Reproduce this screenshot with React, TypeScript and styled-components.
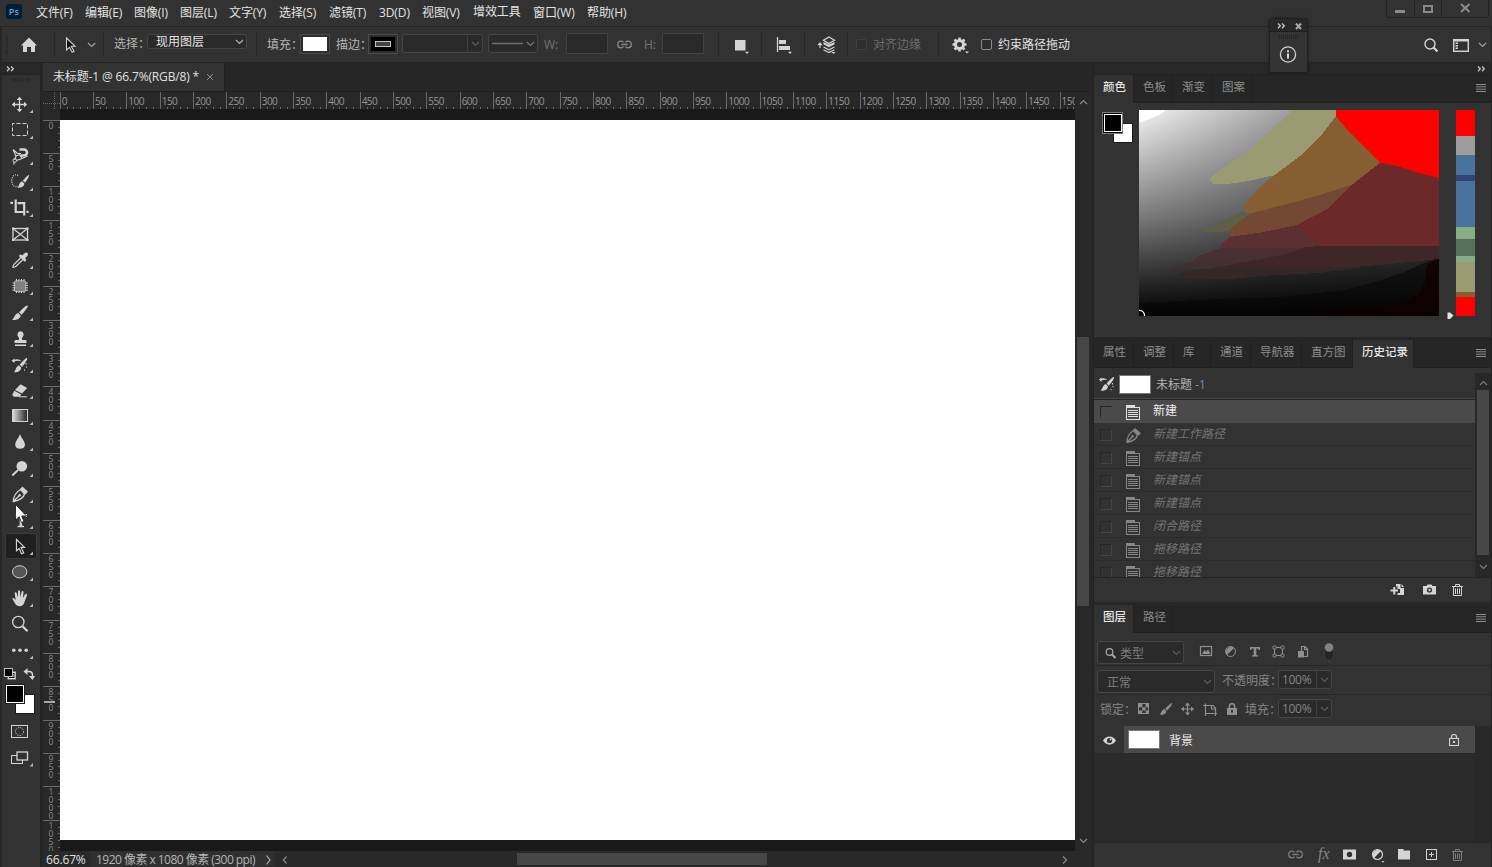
import React from 'react';
import styled, { createGlobalStyle } from 'styled-components';

const Global = createGlobalStyle`
  * { box-sizing: border-box; }
  html, body { margin: 0; background: #323232; overflow: hidden; }
  body { font-family: "Open Sans", "Noto Sans CJK SC", sans-serif; font-size: 12px; color: #d6d6d6; }
  svg { display: block; flex: none; }
`;

const LINE = '#242424';
const ICON = '#d4d4d4';
const DIM = '#8f8f8f';

/* ---------- frame ---------- */
const Page = styled.div`
  width: 1492px; height: 867px; background: #323232; display: flex; flex-direction: column;
  position: relative; overflow: hidden;
`;
const MenuBar = styled.div`
  height: 27px; flex: none; display: flex; border-bottom: 1px solid ${LINE}; padding-left: 6px;
`;
const Logo = styled.div`
  width: 16px; height: 15px; margin: 4px 14px 0 0; border-radius: 3px; background: #001d34; color: #6aa3dc;
  font-size: 9px; font-weight: 600; line-height: 15px; text-align: center; letter-spacing: 0.2px;
`;
const MenuItem = styled.div<{ $w: number; $up?: boolean }>`
  width: ${p => p.$w}px; flex: none; white-space: nowrap; color: #e2e2e2; line-height: 16px;
  padding-top: ${p => (p.$up ? 4 : 5)}px; letter-spacing: -0.1px;
`;
const WindowButtons = styled.div`
  display: flex; width: 103px; height: 18px; margin-left: auto; margin-right: 3px;
  border: 1px solid ${LINE}; border-top: 0; border-radius: 0 0 3px 3px;
`;
const WinBtn = styled.div<{ $w: number }>`
  width: ${p => p.$w}px; display: flex; & + & { border-left: 1px solid ${LINE}; }
`;
const OptionsBar = styled.div`
  height: 36px; flex: none; display: flex; border-bottom: 1px solid ${LINE}; border-left: 2px solid #262626;
  border-right: 1px solid ${LINE};
`;
const Slot = styled.div<{ $w: number; $t?: number }>`
  width: ${p => p.$w}px; flex: none; padding-top: ${p => p.$t ?? 0}px;
`;
const Label = styled.div<{ $w: number; $c?: string; $t?: number; $l?: number }>`
  width: ${p => p.$w}px; flex: none; white-space: nowrap; line-height: 16px; color: ${p => p.$c ?? '#b4b4b4'};
  margin-top: ${p => p.$t ?? 10}px; padding-left: ${p => p.$l ?? 0}px;
`;
const VLine = styled.div`
  width: 1px; height: 25px; margin-top: 5px; background: #272727; flex: none;
`;
const Field = styled.div<{ $w: number; $h: number; $t?: number; $c?: string; $r?: number }>`
  width: ${p => p.$w}px; height: ${p => p.$h}px; margin-top: ${p => p.$t ?? 0}px; margin-right: ${p => p.$r ?? 0}px;
  flex: none; display: flex; align-items: center; background: #2a2a2a; color: ${p => p.$c ?? '#6f6f6f'};
  border: 1px solid #454545; border-radius: 3px; white-space: nowrap; line-height: 14px;
`;
const PlainField = styled(Field)`border-radius: 0; border-color: #414141;`;
const FieldText = styled.div<{ $l: number; $d?: number; $s?: number }>`
  flex: 1; padding-left: ${p => p.$l}px; padding-top: ${p => p.$d ?? 0}px; letter-spacing: ${p => p.$s ?? 0}px;
`;
const FieldArrow = styled.div<{ $w: number; $line?: boolean }>`
  width: ${p => p.$w}px; height: 100%; display: flex; align-items: center; justify-content: center;
  border-left: ${p => (p.$line ? '1px solid #404040' : '0')};
`;
const Swatch = styled.div<{ $c: string }>`
  width: 30px; height: 20px; margin-top: 7px; border: 1px solid #4c4c4c; background: ${p => p.$c};
  box-shadow: inset 0 0 0 2px #2c2c2c; display: flex; align-items: center; justify-content: center; flex: none;
`;
const StrokeMark = styled.div`
  width: 16px; height: 6px; border: 1px solid #c4c4c4; background: #444;
`;
const Check = styled.div<{ $c: string; $t: number; $l: number }>`
  width: 11px; height: 11px; border: 1px solid ${p => p.$c}; border-radius: 2px; margin: ${p => p.$t}px 6px 0 ${p => p.$l}px;
  flex: none; background: #2e2e2e;
`;

/* ---------- workspace ---------- */
const Work = styled.div`
  flex: 1; display: flex; min-height: 0; background: #262626;
`;
const ToolColumn = styled.div`
  width: 41px; flex: none; border-left: 2px solid #262626; border-right: 1px solid #222; display: flex; flex-direction: column;
`;
const ColumnHead = styled.div<{ $right?: boolean }>`
  height: 12px; flex: none; background: #282828; border-bottom: 1px solid #222;
  display: flex; justify-content: ${p => (p.$right ? 'flex-end' : 'flex-start')}; padding: 3px ${p => (p.$right ? 5 : 4)}px 0;
`;
const ToolPanel = styled.div`
  flex: 1; background: #323232; display: flex; flex-direction: column; padding-top: 3px;
`;
const Grip = styled.div`
  height: 4px; width: 19px; margin: 0 0 9px 9px; flex: none;
  background: repeating-linear-gradient(90deg, #262626 0 1px, #323232 1px 2px);
`;
const Tool = styled.div<{ $on?: boolean }>`
  height: 26px; width: 38px; flex: none; position: relative;
  ${p => p.$on && `background: #1f1f1f; box-shadow: inset 0 0 0 1px #3a3a3a; border-radius: 3px; margin: 0 3px; width: 32px; svg { margin-left: -3px; }`}
`;
const DocColumn = styled.div`
  width: 1048px; flex: none; margin-left: 2px; display: flex; flex-direction: column; background: #262626;
`;
const DocTabs = styled.div`
  height: 29px; flex: none; display: flex; border-bottom: 1px solid #202020;
`;
const DocTab = styled.div`
  width: 182px; height: 28px; background: #323232; display: flex; padding: 6px 0 0 10px; color: #e0e0e0; line-height: 16px;
  border-right: 1px solid #202020; white-space: nowrap;
`;
const TabTitle = styled.div`width: 153px; letter-spacing: -0.15px;`;
const DocBody = styled.div`
  height: 759px; flex: none; display: flex;
`;
const RulerV = styled.div`
  width: 17px; background: #282828; display: flex; flex-direction: column; overflow: hidden; position: relative;
`;
const RulerCorner = styled.div`height: 17px; flex: none;`;
const VCells = styled.div`
  height: 742px; overflow: hidden; padding-top: 10.7px; position: relative;
`;
const VCell = styled.div`
  height: 33.333px; border-top: 1px solid #6a6a6a; position: relative; display: flex; flex-direction: column;
  padding: 1px 0 0 5px; color: #8a8a8a; font-size: 8.5px; line-height: 8px;
  span { height: 8px; width: 6px; text-align: center; }
`;
const Ticks = styled.svg`
  position: absolute; left: 0; bottom: 0;
`;
const TicksV = styled.svg`
  position: absolute; right: 0; top: -1px;
`;
const Marker = styled.div`
  position: absolute; left: 1px; top: 609px; width: 11px; height: 2px; background: #a8a8a8;
`;
const CanvasCol = styled.div`
  width: 1015px; display: flex; flex-direction: column;
`;
const RulerH = styled.div`
  height: 17px; background: #282828; display: flex; overflow: hidden; flex: none;
`;
const HCell = styled.div`
  width: 33.333px; flex: none; height: 17px; border-left: 1px solid #6a6a6a; position: relative; color: #969696;
  font-size: 10px; line-height: 19px; padding-left: 1px; letter-spacing: -0.5px;
  &:first-child { margin-left: -0.3px; }
`;
const Pasteboard = styled.div`
  height: 742px; background: #191919; padding: 11px 0;
`;
const Sheet = styled.div`height: 720px; background: #fff;`;
const ScrollV = styled.div`
  width: 16px; background: #282828; display: flex; flex-direction: column; align-items: center; justify-content: space-between;
`;
const Thumb = styled.div<{ $w: number; $h: number }>`
  width: ${p => p.$w}px; height: ${p => p.$h}px; background: #474747; flex: none;
`;
const Status = styled.div`
  flex: 1; display: flex; background: #292929; line-height: 17px; border-bottom: 1px solid #222;
`;
const Zoom = styled.div`width: 48px; padding-left: 3px; color: #e0e0e0; font-size: 12px; letter-spacing: -0.15px;`;
const DocInfo = styled.div`
  width: 184px; background: #303030; padding-left: 5px; color: #b4b4b4; display: flex; white-space: nowrap; letter-spacing: -0.53px;
`;

/* ---------- right panels ---------- */
const Right = styled.div`
  width: 399px; margin-left: 2px; flex: none; display: flex; flex-direction: column; border-left: 1px solid #222; border-right: 1px solid #222;
`;
const Panel = styled.div<{ $h: number; $gap?: number }>`
  height: ${p => p.$h}px; flex: none; margin-bottom: ${p => p.$gap ?? 0}px; display: flex; flex-direction: column; background: #323232;
`;
const TabRow = styled.div`
  height: 28px; flex: none; display: flex; background: #262626; position: relative;
`;
const Tab = styled.div<{ $w: number; $on?: boolean }>`
  width: ${p => p.$w}px; height: 28px; flex: none; padding: 4px 0 0 9px; line-height: 16px; font-size: 11.5px; white-space: nowrap;
  color: ${p => (p.$on ? '#e8e8e8' : '#8c8c8c')}; background: ${p => (p.$on ? '#323232' : 'transparent')};
  font-weight: ${p => (p.$on ? 500 : 400)};
  border-right: 1px solid #202020; border-bottom: ${p => (p.$on ? '0' : '1px solid #202020')};
`;
const TabRest = styled.div`
  flex: 1; border-bottom: 1px solid #202020; display: flex; justify-content: flex-end; padding: 9px 5px 0 0;
`;
const ColorBody = styled.div`
  display: flex; padding: 7px 0 0 8px;
`;
const HistoryWrap = styled.div`
  height: 209px; flex: none; display: flex;
`;
const HistoryList = styled.div`
  width: 381px; overflow: hidden;
`;
const Snapshot = styled.div`
  height: 32px; display: flex; align-items: center; padding: 1px 0 0 5px; border-bottom: 1px solid #252525; 
  box-shadow: inset 0 -1px 0 #484848; color: #b4b4b4;
  b { font-weight: 400; color: #6f93b8; }
`;
const Thumbnail = styled.div`
  width: 32px; height: 19px; background: #fff; border: 1px solid #777; flex: none;
`;
const HRow = styled.div<{ $on?: boolean }>`
  height: 23px; display: flex; color: ${p => (p.$on ? '#ececec' : '#727272')}; font-style: ${p => (p.$on ? 'normal' : 'italic')};
  background: ${p => (p.$on ? '#4a4a4a' : '#323232')}; border-bottom: 1px solid ${p => (p.$on ? '#4a4a4a' : '#2b2b2b')};
  padding-left: 6px; line-height: 16px; white-space: nowrap;
`;
const HBox = styled.div<{ $on?: boolean }>`
  width: 12px; height: 12px; margin: 6px 14px 0 0; border: 1px solid ${p => (p.$on ? 'transparent' : '#454545')};
  border-left-color: #262626; border-top-color: #262626; flex: none;
`;
const HText = styled.div`margin: 3px 0 0 13px; height: 18px;`;
const ScrollHist = styled.div`
  width: 16px; margin-top: 5px; background: #282828; display: flex; flex-direction: column; align-items: center;
`;
const Foot = styled.div<{ $h: number }>`
  height: ${p => p.$h}px; flex: none; border-top: 1px solid #242424; display: flex; background: #323232;
`;
const CtlRow = styled.div<{ $h: number; $line?: boolean }>`
  height: ${p => p.$h}px; flex: none; display: flex; border-bottom: ${p => (p.$line ? '1px solid #282828' : '0')};
`;
const LayerArea = styled.div`
  height: 116px; flex: none; background: #2b2b2b; display: flex;
`;
const LayerRow = styled.div`
  width: 381px; height: 27px; display: flex; background: #323232;
`;
const LayerMain = styled.div`
  margin-left: auto; width: 351px; background: #4a4a4a; display: flex; align-items: center; padding-left: 4px; color: #ececec;
`;
const LayerScroll = styled.div`width: 16px; background: #282828;`;
const Fx = styled.div`
  width: 17px; font-family: "Liberation Serif", serif; font-style: italic; font-size: 16px; line-height: 20px; color: #858585; padding-top: 1px;
`;

/* ---------- floating panel and pointer ---------- */
const Float = styled.div`
  position: absolute; left: 1269px; top: 18px; width: 39px; height: 55px; background: #343434; border: 1px solid #202020;
  border-radius: 4px 4px 0 0; box-shadow: 0 0 3px rgba(0,0,0,.4);
`;
const FloatHead = styled.div`
  height: 13px; background: #282828; border-bottom: 1px solid #1e1e1e; display: flex; padding: 4px 0 0 7px; border-radius: 3px 3px 0 0;
`;
const FloatGrip = styled(Grip)`margin: 3px 0 6px 9px;`;
const Pointer = styled.svg`
  position: absolute; left: 14px; top: 503px;
`;

/* ---------- icons ---------- */
type IP = { w: number; h: number; x?: number; y?: number; children: React.ReactNode };
const I = ({ w, h, x = 0, y = 0, children }: IP) => (
  <svg width={w} height={h} viewBox={`${x} ${y} ${w} ${h}`} fill="none">{children}</svg>
);
const Chevron = ({ c = '#9a9a9a', up = false }: { c?: string; up?: boolean }) => (
  <I w={9} h={6}><path d={up ? 'M1 5L4.5 1.5L8 5' : 'M1 1L4.5 4.5L8 1'} stroke={c} strokeWidth="1.2" /></I>
);
const DoubleArrow = () => (
  <I w={9} h={6}><path d="M1 .5L3.3 2.8L1 5.2M5 .5L7.3 2.8L5 5.2" stroke="#c8c8c8" strokeWidth="1.3" /></I>
);
const MenuLines = () => (
  <I w={10} h={8}><path d="M0 .5H10M0 2.8H10M0 5.2H10M0 7.5H10" stroke="#8e8e8e" /></I>
);
const Corner = () => <path d="M33 18.5V22H29.5Z" fill="#b8b8b8" />;

const brush = 'M27.5 5.5L28.5 6.5C26 10.5 24 13 22 15L19.5 12.5C22 10 24.5 7.5 27.5 5.5ZM18.7 13.2L21.2 15.8C20.7 19.5 16.5 20.7 12.5 20.3C15 18.5 15 14 18.7 13.2Z';

const tools: { g: React.ReactNode; corner?: boolean; on?: boolean }[] = [
  { g: <><path d="M19.5 7V20M13 13.5H26" stroke={ICON} strokeWidth="1.3" /><path d="M19.5 5.8L22.3 9H16.7ZM19.5 21.2L22.3 18H16.7ZM11.8 13.5L15 10.7V16.3ZM27.2 13.5L24 10.7V16.3Z" fill={ICON} /></> },
  { g: <rect x="12.5" y="6.5" width="15" height="12" stroke={ICON} strokeDasharray="4 2" strokeDashoffset="2" /> },
  { g: <><path d="M19.5 5.2H24A4.300 4.300 0 0 1 24 13.800H20.500V11.300H24A1.700 1.700 0 0 0 24 7.800H19.500Z" fill={ICON} /><path d="M13 6.500L17.500 10.500M13 6.500L16 13L14.500 17M17.500 10.500H21M22 15.500L27.500 13M14 19V21.500M16.500 17.500L22 15.500L19.500 11.500M16 13L19.500 11.500" stroke={ICON} strokeWidth="1.2" /><circle cx="14.800" cy="17.500" r="1.800" stroke={ICON} /></> },
  { g: <><path d="M18 6.5A4.2 6 0 1 0 18 17" stroke={ICON} strokeDasharray="1 1.200" strokeWidth="1.2" /><path d="M28.500 6L29.200 6.800C28 9.500 26.500 12 25 13.800L22.800 11.600C24.500 9.700 26.300 7.600 28.500 6ZM22 12.300L24.400 14.600C24 18 21 19.200 17.200 18.800C19.500 17.500 19 13.200 22 12.300Z" fill={ICON} /></> },
  { g: <path d="M10.5 7.8H13M15.7 4.5V17H23M17.5 8.2H24.2V20.5M26.5 16.8H28.7" stroke={ICON} strokeWidth="2.2" /> },
  { corner: false, g: <><rect x="13" y="7.500" width="14.5" height="11.5" stroke={ICON} strokeWidth="1.3" /><path d="M13 7.500L27.5 19M27.5 7.500L13 19" stroke={ICON} strokeWidth="1.2" /><path d="M12 6.500h2v2h-2zM26.500 6.500h2v2h-2zM12 18h2v2h-2zM26.500 18h2v2h-2z" fill={ICON} /></> },
  { g: <><path d="M21.500 10L14 17.300C13.200 18.300 13 19 13 20.500C14.500 20.500 15 20 16 19.200L23.500 12" stroke={ICON} strokeWidth="1.2" /><path d="M18.800 9L20.500 7.300L22 8.500L24.500 6.200C27 4.200 29 7 27.300 9L25 11.300L26.500 13L24.800 14.700Z" fill={ICON} /></> },
  { g: <><path d="M16.5 6V20M19 6V20M21.5 6V20M24 6V20M12.5 10H28M12.5 12.4H28M12.5 14.8H28M12.5 17.2H28" stroke={ICON} /><rect x="14.5" y="7.8" width="11.2" height="10.8" rx="1.5" fill="#808080" stroke={ICON} strokeWidth=".7" /></> },
  { g: <path d={brush} fill={ICON} transform="translate(-.5 .7)" /> },
  { g: <path d="M20.5 6.3A3.3 3.3 0 0 1 22.6 12C21.8 13 22 14 22.3 15H25.3Q26.5 15 26.5 16.2V18H14.5V16.2Q14.5 15 15.7 15H18.7C19 14 19.2 13 18.4 12A3.3 3.3 0 0 1 20.5 6.3ZM15 19.4H26V21H15Z" fill={ICON} /> },
  { g: <><path d={brush} fill={ICON} transform="translate(3.2 1.3) scale(.85 .98)" /><path d="M11.5 9.8L14.500 7.500V8.8C17 7.500 20 8.300 21.500 10.5C19 9.500 17 9.500 14.500 10.3V12Z" fill={ICON} /><path d="M26 12v1.5M26.5 15.5v1.2M24.5 18.5v1.2" stroke={ICON} /></> },
  { g: <><path d="M20.5 7.2L27.2 11L22 16.6L15 13ZM14.3 13.8L21.3 17.500L19.5 19.8H14L12.2 18Z" fill={ICON} /><path d="M19 19.800H27" stroke={ICON} /></> },
  { g: <><defs><linearGradient id="tg"><stop offset="0" stopColor="#e0e0e0" /><stop offset="1" stopColor="#222" /></linearGradient></defs><rect x="12.5" y="6.5" width="15" height="12" fill="url(#tg)" stroke={ICON} /></> },
  { g: <path d="M20 5C21 8.5 25 12 25 16A5 4.8 0 0 1 15.200 16C15.200 12 19 8.500 20 5Z" fill={ICON} /> },
  { g: <><circle cx="21.8" cy="11.2" r="5.3" fill={ICON} /><path d="M18 15L12.3 20.500" stroke={ICON} strokeWidth="1.8" /></> },
  { g: <><path d="M13.300 20.500C13.500 16 14.500 12 20.500 8.500L24.500 13C23.500 17.500 18.500 19.500 13.300 20.500ZM13.300 20.500L19.500 14.500" stroke={ICON} strokeWidth="1.3" /><circle cx="19.700" cy="14.300" r="1.200" fill={ICON} /><path d="M20 8L22.500 5.500L28 10.800L25.500 13.500Z" fill={ICON} /></> },
  { g: <path d="M15 7H27V10H25.800L25 8.500H21.900V18.500L24 19V20.300H17.500V19L19.700 18.500V8.500H17L16 10H15Z" fill={ICON} /> },
  { on: true, g: <path d="M16.500 6.500L24.500 14.300H21L23.700 20L21.500 20.800L19.200 15.500L16.500 17.800Z" fill="#111" stroke={ICON} strokeWidth="1.200" /> },
  { g: <ellipse cx="19.700" cy="12.800" rx="7.200" ry="6.100" fill="#555" stroke={ICON} /> },
  { g: <path d="M12.300 13.300C13.300 12.500 14.300 13.500 15.700 15L14.700 8.500C14.600 7 16.400 6.800 16.700 8.300L17.700 12.500L18 6.200C18.200 4.800 19.900 4.800 20 6.200L20.300 12.300L21.600 6.800C22 5.500 23.600 5.900 23.500 7.200L22.900 13L25.200 9.200C26 8.200 27.500 9 27 10.300L24.300 17.500C23.500 20.200 22 21.200 19.800 21.200C16.500 21.200 15.500 19.300 14.500 17.500C13.700 16 12.500 14.800 12.300 13.300Z" fill={ICON} /> },
  { corner: false, g: <><circle cx="18.300" cy="11" r="5.700" stroke={ICON} strokeWidth="1.300" /><path d="M22.500 15.200L27.500 20.300" stroke={ICON} strokeWidth="2.200" /></> },
  { g: <><circle cx="13.800" cy="13.200" r="1.800" fill={ICON} /><circle cx="20" cy="13.200" r="1.800" fill={ICON} /><circle cx="26.200" cy="13.200" r="1.800" fill={ICON} /></> },
];

const DocIcon = ({ c }: { c: string }) => (
  <I w={14} h={15}><path d="M0 0H9V2H0Z" fill={c} /><rect x=".5" y="2.500" width="13" height="12" stroke={c} /><path d="M2 5.500H12M2 7.500H12M2 9.500H12M2 11.500H12" stroke={c} strokeWidth="1" /></I>
);
const PenIcon = ({ c }: { c: string }) => (
  <I w={15} h={15} x={13} y={6}><path d="M14 20.300C14 16 15 12 20.500 8.500L24.500 13C23.500 17.500 18.500 19.500 14 20.300ZM14 20.300L19.500 14.500" stroke={c} strokeWidth="1.300" /><circle cx="19.700" cy="14.300" r="1.200" fill={c} /><path d="M20 8L22 6L28 11.200L25.500 13.500Z" fill={c} /></I>
);
const LinkIcon = ({ c }: { c: string }) => (
  <I w={15} h={9}><path d="M6.500 2.300C5.900 1.500 5 1.200 4 1.200A3.300 3.300 0 0 0 4 7.800C5 7.800 5.900 7.500 6.500 6.700M8.500 2.300C9.100 1.500 10 1.200 11 1.200A3.300 3.300 0 0 1 11 7.800C10 7.800 9.100 7.500 8.500 6.700M4.300 4.500H10.700" stroke={c} strokeWidth="1.300" /></I>
);
const HistoryBrush = () => (
  <I w={15} h={14} x={12} y={7}><path d={brush} fill={ICON} transform="translate(3 1.800) scale(.85 .93)" /><path d="M12 9.500L14.500 7.500V8.800C17 7.800 19 8.500 20.500 10.300C18 9.700 16.500 9.700 14.500 10.500V12Z" fill={ICON} /><path d="M25.500 13v1.500M26 16v1.200M24 19v1.200" stroke={ICON} /></I>
);

const hLabels = Array.from({ length: 31 }, (_, i) => i * 50);
const vLabels = Array.from({ length: 22 }, (_, i) => i * 50);

const menus: [string, number][] = [
  ['文件(F)', 49], ['编辑(E)', 49], ['图像(I)', 46], ['图层(L)', 49], ['文字(Y)', 50], ['选择(S)', 50], ['滤镜(T)', 50],
  ['3D(D)', 43], ['视图(V)', 51], ['增效工具', 60], ['窗口(W)', 54], ['帮助(H)', 60],
];
const historyRows = ['新建工作路径', '新建锚点', '新建锚点', '新建锚点', '闭合路径', '拖移路径', '拖移路径'];

const Ramp = () => (
  <I w={300} h={206}>
    <defs>
      <linearGradient id="rx" x1="0" x2="1" y1="0" y2="0"><stop offset="0" stopColor="#f4f4f4" /><stop offset=".5" stopColor="#a0a0a0" /><stop offset="1" stopColor="#848484" /></linearGradient>
      <linearGradient id="ry" x1="0" x2="0" y1="0" y2="1"><stop offset="0" stopColor="#000" stopOpacity="0" /><stop offset=".5" stopColor="#000" stopOpacity=".48" /><stop offset=".85" stopColor="#000" stopOpacity=".85" /><stop offset="1" stopColor="#000" /></linearGradient>
    </defs>
    <path d="M0 0H300V206H0Z" fill="url(#rx)" />
    <path d="M0 0H300V206H0Z" fill="url(#ry)" />
    <g shapeRendering="crispEdges">
      <path d="M0 0H27L22 4L10 9L0 13Z" fill="#fff" />
      <path d="M0 193L60 190L140 187L200 181L240 171L265 162L290 151L300 148V206H0Z" fill="#060606" fillOpacity=".6" />
      <path d="M300 149L288 155L286 172L279 185L255 195L190 202L160 206H300Z" fill="#100000" fillOpacity=".8" />
      <path d="M154 0H197L196 8L184 24L165 46L145 64L131 66L110 71L88 74H74L71 70L74 65L88 55L105 44L123 29L140 13Z" fill="#9a9b72" />
      <path d="M64 121L72 116L86 110L104 101L109 106L94 120L82 122H66Z" fill="#5f5e46" />
      <path d="M197 6L242 53L214 74L190 82L160 91L113 103L105 101V96L112 86L124 74L145 58L165 43L184 23Z" fill="#875d32" />
      <path d="M214 74L208 79L190 98L175 106L158 115L125 122L94 127L90 124L92 118L108 106L113 103L160 91L190 82Z" fill="#744832" />
      <path d="M158 115L172 130L184 136L176 138H82L80 136L91 127L125 122Z" fill="#5c3033" />
      <path d="M242 52L300 60V136H180L168 127L158 115L175 106L190 98L208 79L214 74Z" fill="#6c2929" />
      <path d="M82 138H167L148 144L110 152H53L60 146Z" fill="#463032" />
      <path d="M53 152H103L72 159H30L38 155Z" fill="#3d3132" />
      <path d="M167 137L182 136H300V149L250 154L205 158L68 159L100 153L148 144Z" fill="#3f2728" />
      <path d="M60 159L225 157L180 163L120 166L92 169H48L38 166L42 163Z" fill="#332728" />
      <path d="M197 0H300V68L280 63L258 56L242 53L224 36L206 17L197 6Z" fill="#f00" />
    </g>
    <path d="M0 200.500A5 5 0 0 1 5.500 206" stroke="#fff" strokeWidth="1.200" />
  </I>
);

const Hues = () => {
  const bands: [number, number, string][] = [[0, 26, '#f00'], [26, 19, '#9c9c9c'], [45, 20, '#49739c'], [65, 6, '#314572'], [71, 46, '#49739c'], [117, 12, '#86ae86'], [129, 17, '#56705a'], [146, 6, '#86ae86'], [152, 30, '#9a9b72'], [182, 5, '#875d32'], [187, 19, '#f00']];
  return <I w={29} h={210}>{bands.map(([y, h, c]) => <rect key={y} x="10" y={y} width="19" height={h} fill={c} />)}<path d="M1.500 202.500H4L7.500 205.500L4 209H1.500Z" fill="#e4e4e4" /></I>;
};

export default function App() {
  return (
    <>
      <Global />
      <Page>
        <MenuBar>
          <Logo>Ps</Logo>
          {menus.map(([t, w]) => <MenuItem key={t} $w={w} $up={t === '增效工具'}>{t}</MenuItem>)}
          <WindowButtons>
            <WinBtn $w={27}><I w={26} h={17}><path d="M8 10H18V13H8Z" fill="#8a8a8a" /></I></WinBtn>
            <WinBtn $w={27}><I w={26} h={17}><rect x="9" y="6" width="8" height="6" stroke="#8a8a8a" strokeWidth="2" /></I></WinBtn>
            <WinBtn $w={47}><I w={46} h={17}><path d="M19 4L27.500 12M27.500 4L19 12" stroke="#8a8a8a" strokeWidth="2" /></I></WinBtn>
          </WindowButtons>
        </MenuBar>

        <OptionsBar>
          <I w={52} h={35} x={2} y={27}>
            <path d="M7 35V54" stroke="#242424" strokeWidth="2" strokeDasharray="1 1" />
            <path d="M29 37.500L37 45.500H35V52H31V47H27V52H23V45.500H21Z" fill={ICON} />
          </I>
          <VLine />
          <I w={48} h={35} x={55} y={27}>
            <path d="M66.500 38L75 46.200H71.200L74 51.200L72.200 52.200L69.500 47.300L66.500 50Z" fill="#0c0c0c" stroke={ICON} strokeWidth="1.100" />
            <path d="M88 43L91.700 46.500L95.400 43" stroke="#a0a0a0" strokeWidth="1.200" />
          </I>
          <VLine />
          <Label $w={43} $l={10} $t={9}>选择：</Label>
          <Field $w={100} $h={15} $t={7} $c="#e6e6e6" $r={9}><FieldText $l={8}>现用图层</FieldText><FieldArrow $w={14}><Chevron c="#b0b0b0" /></FieldArrow></Field>
          <VLine />
          <Label $w={43} $l={10}>填充：</Label>
          <Swatch $c="#fff" />
          <Label $w={38} $l={6}>描边：</Label>
          <Swatch $c="#000"><StrokeMark /></Swatch>
          <Slot $w={4} />
          <Field $w={81} $h={19} $t={7} $r={5}><FieldText $l={0} /><FieldArrow $w={15} $line><Chevron c="#5c5c5c" /></FieldArrow></Field>
          <Field $w={50} $h={19} $t={7}><I w={34} h={3}><path d="M3 1.500H34" stroke="#6c6c6c" strokeWidth="1.500" /></I><FieldArrow $w={14}><Chevron c="#7a7a7a" /></FieldArrow></Field>
          <Label $w={28} $l={6} $c="#757575">W:</Label>
          <PlainField $w={42} $h={21} $t={6} $r={9} />
          <Slot $w={27} $t={13}><LinkIcon c="#8a8a8a" /></Slot>
          <Label $w={18} $c="#757575">H:</Label>
          <PlainField $w={42} $h={21} $t={6} $r={14} />
          <I w={138} h={35} x={718} y={27}>
            <path d="M718.500 32V57M761.500 32V57M804.500 32V57M847.500 32V57" stroke="#272727" />
            <path d="M735 40H745.500V50.500H735ZM745 51.800H749L747 54Z" fill={ICON} />
            <path d="M777.500 37V52" stroke={ICON} strokeWidth="1.300" /><path d="M779 40H786V44H779ZM779 46H790V50H779ZM788 51.800H792L790 54Z" fill={ICON} />
            <path d="M829 37L834.500 40.300L829 43.600L823.500 40.300Z" fill="#323232" stroke={ICON} strokeWidth="1.300" />
            <path d="M823.500 42L829 44.500L834.500 42V44.300L829 47.300L823.500 44.300Z" fill={ICON} />
            <path d="M823.500 47L829 49.800L834.500 47M823.500 49.800L829 52.600L834.500 49.800" stroke={ICON} strokeWidth="1.100" />
            <path d="M820 48V43" stroke={ICON} strokeWidth="1.100" /><path d="M817.300 45.300L820 42L822.700 45.300Z" fill={ICON} /><path d="M831.500 52H835.500L833.500 54Z" fill={ICON} />
          </I>
          <Check $c="#404040" $t={12} $l={0} />
          <Label $w={65} $c="#6c6c6c">对齐边缘</Label>
          <VLine />
          <I w={34} h={35} x={939} y={27}>
            <circle cx="959.500" cy="44.500" r="4" stroke={ICON} strokeWidth="3" /><path d="M959.500 37.500V40M959.500 49V51.500M952.500 44.500H955M964 44.500H966.500M954.500 39.500L956.500 41.500M964.500 39.500L962.500 41.500M954.500 49.500L956.500 47.500M964.500 49.500L962.500 47.500" stroke={ICON} strokeWidth="2.500" /><path d="M965 51.500H969L967 53.500Z" fill={ICON} />
          </I>
          <Check $c="#8a8a8a" $t={12} $l={8} />
          <Label $w={426} $c="#e0e0e0">约束路径拖动</Label>
          <I w={66} h={35} x={1424} y={27}>
            <circle cx="1430" cy="44" r="5" stroke={ICON} strokeWidth="1.400" /><path d="M1433.500 47.500L1437.500 51.500" stroke={ICON} strokeWidth="2.200" />
            <rect x="1453.700" y="39.700" width="14.600" height="11.600" stroke={ICON} strokeWidth="1.400" /><path d="M1453 40.500H1469" stroke={ICON} strokeWidth="2" /><path d="M1455.500 42.500h2.500v1.500h-2.500zM1455.500 45h2.500v1.500h-2.500zM1455.500 47.500h2.500v1.500h-2.500z" fill={ICON} />
            <path d="M1479 43L1482.500 46.500L1486 43" stroke="#a0a0a0" strokeWidth="1.200" />
          </I>
        </OptionsBar>

        <Work>
          <ToolColumn>
            <ColumnHead><DoubleArrow /></ColumnHead>
            <ToolPanel>
              <Grip />
              {tools.map((t, i) => (
                <Tool key={i} $on={t.on}>
                  <I w={38} h={26} x={2}>{t.g}{t.corner !== false && <Corner />}</I>
                </Tool>
              ))}
              <I w={38} h={112} x={2} y={663}>
                <rect x="8" y="672" width="7.500" height="7" fill="#fff" stroke="#bbb" /><rect x="9.500" y="673.500" width="4.500" height="4" fill="#fff" stroke="#000" /><rect x="4.500" y="668.500" width="8" height="8" fill="#000" stroke="#bbb" />
                <path d="M26 671.500H29Q32.500 671.500 32.500 675V677" stroke={ICON} strokeWidth="1.500" /><path d="M23.500 671.500L27.500 668V675ZM32.500 680L29 676H35Z" fill={ICON} />
                <rect x="15.500" y="694.500" width="19" height="19" fill="#fff" stroke="#1a1a1a" />
                <rect x="5.500" y="684.500" width="19" height="19" fill="#000" stroke="#1a1a1a" /><rect x="6.500" y="685.500" width="17" height="17" stroke="#fff" />
                <rect x="11.500" y="725.500" width="16" height="12" stroke={ICON} /><circle cx="19.500" cy="731.500" r="4" stroke={ICON} strokeDasharray="1.200 1.200" />
                <rect x="11.500" y="755.500" width="11" height="8" stroke={ICON} /><rect x="17" y="752" width="10.500" height="8" fill="#323232" stroke={ICON} strokeWidth="1.300" />
                <path d="M33 763V766.500H29.500Z" fill="#b8b8b8" />
              </I>
            </ToolPanel>
          </ToolColumn>

          <DocColumn>
            <DocTabs>
              <DocTab><TabTitle>未标题-1 @ 66.7%(RGB/8) *</TabTitle><I w={8} h={16}><path d="M1 5L7 11M7 5L1 11" stroke="#8c8c8c" /></I></DocTab>
            </DocTabs>
            <DocBody>
              <RulerV>
                <RulerCorner><I w={17} h={17}><path d="M11.500 0V17M0 11.500H17" stroke="#6a6a6a" strokeDasharray="1 1" /></I></RulerCorner>
                <VCells>
                  {vLabels.map(n => (
                    <VCell key={n}>
                      {String(n).split('').map((d, k) => <span key={k}>{d}</span>)}
                      <TicksV width="2" height="34" shapeRendering="crispEdges"><path d="M0 7.200H2M0 13.800H2M0 20.500H2M0 27.200H2" stroke="#6a6a6a" /></TicksV>
                    </VCell>
                  ))}
                </VCells>
                <Marker />
              </RulerV>
              <CanvasCol>
                <RulerH>
                  {hLabels.map(n => (
                    <HCell key={n}>{n}<Ticks width="33" height="2" shapeRendering="crispEdges"><path d="M6.200 0V2M12.800 0V2M19.500 0V2M26.200 0V2" stroke="#6a6a6a" /></Ticks></HCell>
                  ))}
                </RulerH>
                <Pasteboard><Sheet /></Pasteboard>
              </CanvasCol>
              <ScrollV>
                <Slot $w={9} $t={7}><Chevron c="#8a8a8a" up /></Slot>
                <Thumb $w={12} $h={269} />
                <Slot $w={9}><I w={9} h={13}><path d="M1 1L4.500 4.500L8 1" stroke="#8a8a8a" strokeWidth="1.200" /></I></Slot>
              </ScrollV>
            </DocBody>
            <Status>
              <Zoom>66.67%</Zoom>
              <DocInfo>
                <Slot $w={169}>1920 像素 x 1080 像素 (300 ppi)</Slot>
                <Slot $w={8} $t={4}><I w={8} h={10}><path d="M1.500 .5L5 5L1.500 9.500" stroke="#b0b0b0" strokeWidth="1.200" /></I></Slot>
              </DocInfo>
              <Slot $w={242} $t={4}><I w={20} h={10}><path d="M11.500 1.500L8.500 5L11.500 8.500" stroke="#8a8a8a" strokeWidth="1.200" /></I></Slot>
              <Slot $w={540} $t={2}><Thumb $w={250} $h={12} /></Slot>
              <Slot $w={20} $t={4}><I w={16} h={10}><path d="M6 1.500L9.500 5L6 8.500" stroke="#8a8a8a" strokeWidth="1.200" /></I></Slot>
            </Status>
          </DocColumn>

          <Right>
            <ColumnHead $right><DoubleArrow /></ColumnHead>
            <Panel $h={262} $gap={3}>
              <TabRow><Tab $w={40} $on>颜色</Tab><Tab $w={39}>色板</Tab><Tab $w={40}>渐变</Tab><Tab $w={40}>图案</Tab><TabRest><MenuLines /></TabRest></TabRow>
              <ColorBody>
                <I w={37} h={40} x={1102} y={110}>
                  <rect x="1113.500" y="123.500" width="19" height="19" fill="#fff" stroke="#1a1a1a" />
                  <rect x="1102.500" y="112.500" width="20" height="21" fill="#000" stroke="#7a7a7a" /><rect x="1104.500" y="114.500" width="17" height="17" stroke="#fff" />
                </I>
                <Ramp />
                <Slot $w={7} />
                <Hues />
              </ColorBody>
            </Panel>
            <Panel $h={262} $gap={3}>
              <TabRow><Tab $w={40}>属性</Tab><Tab $w={40}>调整</Tab><Tab $w={37}>库</Tab><Tab $w={40}>通道</Tab><Tab $w={51}>导航器</Tab><Tab $w={51}>直方图</Tab><Tab $w={61} $on>历史记录</Tab><TabRest><MenuLines /></TabRest></TabRow>
              <HistoryWrap>
                <HistoryList>
                  <Snapshot><HistoryBrush /><Slot $w={5} /><Thumbnail /><Slot $w={5} /><span>未标题 <b>-1</b></span></Snapshot>
                  <HRow $on><HBox $on /><Slot $w={14} $t={5}><DocIcon c="#dedede" /></Slot><HText>新建</HText></HRow>
                  {historyRows.map((t, i) => (
                    <HRow key={i}><HBox /><Slot $w={14} $t={5}>{i === 0 ? <PenIcon c="#868686" /> : <DocIcon c="#868686" />}</Slot><HText>{t}</HText></HRow>
                  ))}
                </HistoryList>
                <ScrollHist><Slot $w={9} $t={7}><Chevron c="#7c7c7c" up /></Slot><Slot $w={9} $t={4} /><Thumb $w={12} $h={165} /><Slot $w={9} $t={9}><Chevron c="#7c7c7c" /></Slot></ScrollHist>
              </HistoryWrap>
              <Foot $h={25}>
                <I w={397} h={24} x={1094} y={578}>
                  <path d="M1396 584H1400.500V588H1404V595H1397.500V593H1400V589H1397.500V586.500H1396ZM1401.500 584L1404 587H1401.500Z" fill={ICON} /><path d="M1390.500 590.500H1398M1394.300 587V594.500" stroke={ICON} strokeWidth="2" />
                  <path d="M1423 586H1426.500L1427.500 584.500H1431.500L1432.500 586H1436V594.500H1423Z" fill={ICON} /><circle cx="1429.500" cy="590" r="2.600" fill="#323232" /><circle cx="1429.500" cy="590" r="1.200" fill={ICON} />
                  <path d="M1452 586.500H1463M1455.500 586V584.500H1459.500V586M1453.500 587V595.500H1461.500V587M1455.500 588.500V594M1457.500 588.500V594M1459.500 588.500V594" stroke={ICON} />
                </I>
              </Foot>
            </Panel>
            <Panel $h={262}>
              <TabRow><Tab $w={40} $on>图层</Tab><Tab $w={39}>路径</Tab><TabRest><MenuLines /></TabRest></TabRow>
              <CtlRow $h={33} $line>
                <Slot $w={3} />
                <Field $w={87} $h={23} $t={8} $c="#7c7c7c">
                  <I w={22} h={14}><circle cx="11.500" cy="6" r="3.300" stroke="#a8a8a8" strokeWidth="1.200" /><path d="M14 8.500L17.500 12" stroke="#a8a8a8" strokeWidth="2" /></I>
                  <FieldText $l={0} $d={2}>类型</FieldText><FieldArrow $w={14}><Chevron c="#5c5c5c" /></FieldArrow>
                </Field>
                <I w={160} h={32} x={1184} y={633}>
                  <rect x="1200.500" y="646.500" width="11" height="9" stroke={DIM} strokeWidth="1.200" /><path d="M1202 654L1204.500 650L1206 652L1208 649.500L1210.500 654Z" fill={DIM} />
                  <circle cx="1230.500" cy="651.500" r="5" stroke={DIM} /><path d="M1227 655A5 5 0 0 1 1234 648Z" fill={DIM} />
                  <path d="M1250 647H1260V650H1259L1258 648.500H1256.300V655L1258 655.500V656.500H1252V655.500L1253.700 655V648.500H1252L1251 650H1250Z" fill={DIM} />
                  <rect x="1274.500" y="647.500" width="8" height="8" stroke={DIM} /><path d="M1273 646h3v3h-3zM1281 646h3v3h-3zM1273 654h3v3h-3zM1281 654h3v3h-3z" fill="#323232" stroke={DIM} strokeWidth=".8" />
                  <path d="M1301.500 651V646.500H1305L1307.500 649V656.500H1304M1304.500 646.500V649.500H1307.500" stroke={DIM} strokeWidth="1.200" /><rect x="1298" y="651" width="6" height="6.500" fill={DIM} />
                  <rect x="1324.500" y="643.500" width="9" height="17" rx="4.500" fill="#262626" stroke="#3e3e3e" /><circle cx="1329" cy="647.500" r="4.200" fill="#828282" />
                </I>
              </CtlRow>
              <CtlRow $h={29} $line>
                <Slot $w={3} />
                <Field $w={118} $h={23} $t={4} $c="#7c7c7c"><FieldText $l={9} $d={2}>正常</FieldText><FieldArrow $w={14}><Chevron c="#5c5c5c" /></FieldArrow></Field>
                <Label $w={63} $l={7} $t={7} $c="#858585">不透明度：</Label>
                <Field $w={54} $h={19} $t={4} $c="#858585"><FieldText $l={3} $s={-0.3}>100%</FieldText><FieldArrow $w={15} $line><Chevron c="#5c5c5c" /></FieldArrow></Field>
              </CtlRow>
              <CtlRow $h={31}>
                <Label $w={40} $l={6} $t={7} $c="#858585">锁定：</Label>
                <I w={111} h={31} x={1134} y={695}>
                  <rect x="1138.500" y="703.500" width="10" height="10" stroke={DIM} /><path d="M1139 704h3.300v3.300h-3.300zM1145.600 704h3.300v3.300h-3.300zM1142.300 707.300h3.300v3.300h-3.300zM1139 710.600h3.300v3.300h-3.300zM1145.600 710.600h3.300v3.300h-3.300z" fill={DIM} />
                  <path d={brush} fill={DIM} transform="translate(1149.500 698.500) scale(.8)" />
                  <path d="M1187.500 703V715M1181.500 709H1193.500" stroke={DIM} strokeWidth="1.200" /><path d="M1187.500 702.500L1190 705.500H1185ZM1187.500 715.500L1190 712.500H1185ZM1181 709L1184 706.500V711.500ZM1194 709L1191 706.500V711.500Z" fill={DIM} />
                  <path d="M1203 705.500H1213L1215.500 708V713M1205.500 703.500V713.500H1217M1205.500 713.500V716M1215.500 713V716M1211.500 705.500V709H1215" stroke={DIM} strokeWidth="1.200" />
                  <path d="M1229.500 708V706.300A2.500 2.500 0 0 1 1234.500 706.300V708" stroke={DIM} strokeWidth="1.500" /><path d="M1227 708H1237V715H1227Z" fill={DIM} /><rect x="1231" y="710" width="2" height="2.500" fill="#323232" />
                </I>
                <Label $w={33} $l={0} $t={7} $c="#858585">填充：</Label>
                <Field $w={54} $h={19} $t={4} $c="#858585"><FieldText $l={3} $s={-0.3}>100%</FieldText><FieldArrow $w={15} $line><Chevron c="#5c5c5c" /></FieldArrow></Field>
              </CtlRow>
              <LayerArea>
                <LayerRow>
                  <I w={29} h={27} x={1094} y={726}><path d="M1103 740.500C1106 735 1113 735 1116 740.500C1113 746 1106 746 1103 740.500Z" fill={ICON} /><circle cx="1109.500" cy="740.500" r="2.600" fill="#323232" /><circle cx="1110.500" cy="739.500" r=".9" fill={ICON} /></I>
                  <LayerMain>
                    <Thumbnail /><Slot $w={9} /><span>背景</span><Slot $w={255} />
                    <I w={12} h={13}><rect x="1.500" y="5.500" width="9" height="7" stroke={ICON} /><path d="M3.500 5.500V4A2.500 2.500 0 0 1 8.500 4V5.500" stroke={ICON} strokeWidth="1.200" /><rect x="5" y="8" width="2" height="2" fill={ICON} /></I>
                  </LayerMain>
                </LayerRow>
                <LayerScroll />
              </LayerArea>
              <Foot $h={25}>
                <Slot $w={194} />
                <Slot $w={30} $t={7}><LinkIcon c="#7c7c7c" /></Slot>
                <Fx>fx</Fx>
                <I w={143} h={24} x={1335} y={843}>
                  <path d="M1343 849.500H1356V859.500H1343Z" fill={ICON} /><circle cx="1349.500" cy="854.500" r="2.700" fill="#323232" />
                  <circle cx="1377.500" cy="854.500" r="5" stroke={ICON} strokeWidth="1.200" /><path d="M1374 858A5 5 0 0 1 1381 851Z" fill={ICON} /><path d="M1381.500 861h3l-1.500 1.800z" fill={ICON} />
                  <path d="M1398 849H1403.500V850.500H1410V859.500H1398Z" fill={ICON} />
                  <rect x="1426.500" y="849.500" width="10" height="10" stroke={ICON} /><path d="M1429 854.500H1434M1431.500 852V857" stroke={ICON} />
                  <path d="M1452 851.500H1463M1455.500 851V849.500H1459.500V851M1453.500 852V860.500H1461.500V852M1455.500 853.500V859M1457.500 853.500V859M1459.500 853.500V859" stroke="#7c7c7c" />
                </I>
              </Foot>
            </Panel>
          </Right>
        </Work>

        <Float>
          <FloatHead><DoubleArrow /><Slot $w={9} /><I w={7} h={7}><path d="M1 .5L6 6M6 .5L1 6" stroke="#a8a8a8" strokeWidth="2" /></I></FloatHead>
          <FloatGrip />
          <I w={37} h={20}><circle cx="18" cy="9.500" r="7.600" stroke={ICON} strokeWidth="1.300" /><path d="M17 8.500H19V13.500H17ZM17 5.200H19V7.200H17Z" fill={ICON} /></I>
        </Float>
        <Pointer width="14" height="22" viewBox="0 0 14 22"><path d="M1.500 1.500V17L5.200 13.800L7.500 19.500L10 18.500L7.700 13H12.500Z" fill="#fff" stroke="#111" strokeWidth=".8" /></Pointer>
      </Page>
    </>
  );
}
